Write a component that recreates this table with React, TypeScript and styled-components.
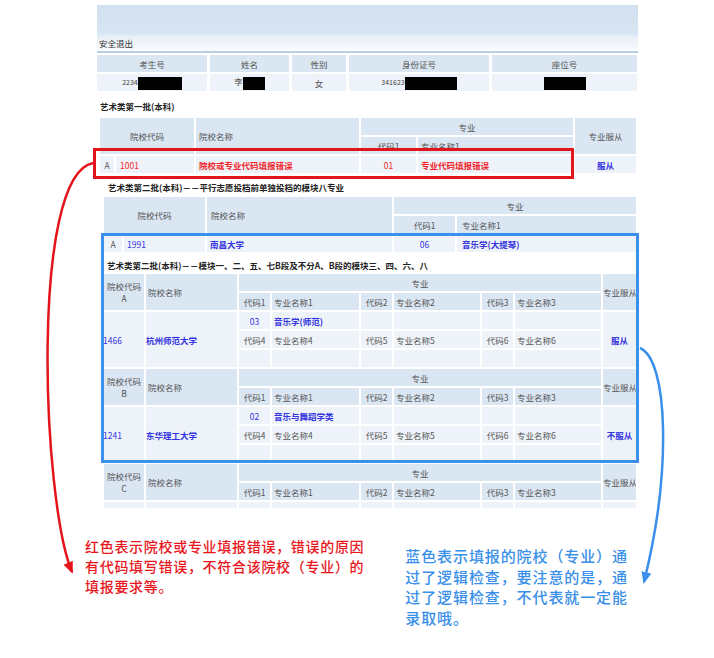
import React from "react";
import styled, { createGlobalStyle } from "styled-components";

const GlobalStyle = createGlobalStyle`
  html, body { margin: 0; padding: 0; background: #fff; }
  body { font-family: "Noto Sans CJK SC", "Noto Sans", sans-serif; }
`;

const Canvas = styled.div`
  position: relative;
  width: 714px;
  height: 658px;
  overflow: hidden;
  background: #fff;
`;

const Sheet = styled.div`
  margin-left: 97px;
  padding-top: 5px;
  width: 541px;
  font-family: "Noto Sans CJK SC", sans-serif;
  font-size: 8.5px;
  color: #555;
`;

const Banner = styled.div`
  height: 30px;
  background: linear-gradient(#d1e0ef, #d9e6f3);
`;

const LogoutBar = styled.div`
  height: 16px;
  line-height: 16px;
  padding-left: 2px;
  background: linear-gradient(#e4edf7, #fafcfe);
  border-bottom: 2px solid #b9cee3;
  color: #333;
  font-size: 8.5px;
`;

const SectionTitle = styled.div<{ $indent: number; $mt: number }>`
  margin-top: ${(p) => p.$mt}px;
  padding-left: ${(p) => p.$indent}px;
  height: 14px;
  line-height: 14px;
  font-size: 8.5px;
  font-weight: 700;
  color: #222;
  white-space: nowrap;
`;

const Grid = styled.table<{ $ml: number; $w: number; $sx?: number; $mt?: number }>`
  margin-left: ${(p) => p.$ml}px;
  margin-top: ${(p) => p.$mt ?? 0}px;
  width: ${(p) => p.$w}px;
  table-layout: fixed;
  border-collapse: separate;
  border-spacing: ${(p) => p.$sx ?? 2}px 2px;
`;

const Col = styled.col<{ $w: number }>`
  width: ${(p) => p.$w}px;
`;

type Align = "left" | "center";

const Th = styled.th<{ $align?: Align; $indent?: number }>`
  background: #dae6f2;
  color: #555;
  font-weight: normal;
  font-size: 8.5px;
  height: 17px;
  padding: 0;
  text-align: ${(p) => p.$align ?? "center"};
  text-indent: ${(p) => p.$indent ?? 0}px;
  vertical-align: middle;
  line-height: 12px;
  white-space: nowrap;
  overflow: hidden;
`;

const toneColor = { grey: "#555", red: "#f0282d", blue: "#3434e0" };

const Td = styled.td<{
  $tone?: "grey" | "red" | "blue";
  $align?: Align;
  $indent?: number;
  $bold?: boolean;
  $h?: number;
}>`
  background: #eef3f9;
  color: ${(p) => toneColor[p.$tone ?? "grey"]};
  font-weight: ${(p) => (p.$bold ? 700 : 400)};
  font-size: 8.5px;
  height: ${(p) => p.$h ?? 17}px;
  padding: 0;
  text-align: ${(p) => p.$align ?? "center"};
  text-indent: ${(p) => p.$indent ?? 0}px;
  vertical-align: middle;
  line-height: 12px;
  white-space: nowrap;
  overflow: hidden;
`;

const Digits = styled.span`
  font-size: 7px;
  color: #444;
`;

const Redact = styled.span<{ $w: number }>`
  display: inline-block;
  width: ${(p) => p.$w}px;
  height: 13px;
  background: #000;
  vertical-align: middle;
`;

const Frame = styled.div<{ $color: string; $x: number; $y: number; $w: number; $h: number }>`
  position: absolute;
  left: ${(p) => p.$x}px;
  top: ${(p) => p.$y}px;
  width: ${(p) => p.$w}px;
  height: ${(p) => p.$h}px;
  box-sizing: border-box;
  border: 3px solid ${(p) => p.$color};
  pointer-events: none;
`;

const ArrowLayer = styled.svg`
  position: absolute;
  left: 0;
  top: 0;
  pointer-events: none;
`;

const Notes = styled.div`
  display: flex;
  align-items: flex-start;
  margin-top: 26px;
  font-family: "Noto Sans CJK SC", sans-serif;
  font-weight: 500;
  white-space: nowrap;
`;

const Note = styled.div<{ $color: string; $ml: number; $mt: number; $size: number; $ls: number; $lh: number }>`
  margin-left: ${(p) => p.$ml}px;
  margin-top: ${(p) => p.$mt}px;
  color: ${(p) => p.$color};
  font-size: ${(p) => p.$size}px;
  letter-spacing: ${(p) => p.$ls}px;
  line-height: ${(p) => p.$lh}px;
`;

function GroupHeader({ letter }: { letter: string }) {
  return (
    <>
      <tr>
        <Th rowSpan={2}>
          院校代码
          <br />
          {letter}
        </Th>
        <Th rowSpan={2} $align="left" $indent={2}>
          院校名称
        </Th>
        <Th colSpan={6}>专业</Th>
        <Th rowSpan={2}>专业服从</Th>
      </tr>
      <tr>
        <Th>代码1</Th>
        <Th $align="left" $indent={2}>专业名称1</Th>
        <Th>代码2</Th>
        <Th $align="left" $indent={2}>专业名称2</Th>
        <Th>代码3</Th>
        <Th $align="left" $indent={2}>专业名称3</Th>
      </tr>
    </>
  );
}

function GroupBody({
  code,
  school,
  major,
  majorName,
  obey,
}: {
  code: string;
  school: string;
  major: string;
  majorName: string;
  obey: string;
}) {
  return (
    <>
      <tr>
        <Td rowSpan={3} $tone="blue" $align="left" $indent={-1}>
          {code}
        </Td>
        <Td rowSpan={3} $tone="blue" $align="left" $indent={0} $bold>
          {school}
        </Td>
        <Td $tone="blue">{major}</Td>
        <Td $tone="blue" $align="left" $indent={2} $bold>
          {majorName}
        </Td>
        <Td />
        <Td />
        <Td />
        <Td />
        <Td rowSpan={3} $tone="blue" $bold>
          {obey}
        </Td>
      </tr>
      <tr>
        <Td>代码4</Td>
        <Td $align="left" $indent={2}>专业名称4</Td>
        <Td>代码5</Td>
        <Td $align="left" $indent={2}>专业名称5</Td>
        <Td>代码6</Td>
        <Td $align="left" $indent={2}>专业名称6</Td>
      </tr>
      <tr>
        <Td />
        <Td />
        <Td />
        <Td />
        <Td />
        <Td />
      </tr>
    </>
  );
}

export default function App() {
  return (
    <Canvas>
      <GlobalStyle />
      <Sheet>
        <Banner />
        <LogoutBar>安全退出</LogoutBar>

        <Grid $ml={-3} $w={546} $sx={3}>
          <colgroup>
            <Col $w={110} />
            <Col $w={79} />
            <Col $w={54} />
            <Col $w={140} />
            <Col $w={145} />
          </colgroup>
          <tbody>
            <tr>
              <Th>考生号</Th>
              <Th>姓名</Th>
              <Th>性别</Th>
              <Th>身份证号</Th>
              <Th>座位号</Th>
            </tr>
            <tr>
              <Td>
                <Digits>2234</Digits>
                <Redact $w={44} />
              </Td>
              <Td>
                李<Redact $w={22} />
              </Td>
              <Td>女</Td>
              <Td>
                <Digits>341623</Digits>
                <Redact $w={52} />
              </Td>
              <Td>
                <Redact $w={42} />
              </Td>
            </tr>
          </tbody>
        </Grid>

        <SectionTitle $indent={3} $mt={6}>
          艺术类第一批(本科)
        </SectionTitle>
        <Grid $ml={1} $w={540} $mt={3}>
          <colgroup>
            <Col $w={14} />
            <Col $w={78} />
            <Col $w={163} />
            <Col $w={55} />
            <Col $w={155} />
            <Col $w={61} />
          </colgroup>
          <tbody>
            <tr>
              <Th colSpan={2} rowSpan={2}>院校代码</Th>
              <Th rowSpan={2} $align="left" $indent={3}>院校名称</Th>
              <Th colSpan={2}>专业</Th>
              <Th rowSpan={2}>专业服从</Th>
            </tr>
            <tr>
              <Th>代码1</Th>
              <Th $align="left" $indent={3}>专业名称1</Th>
            </tr>
            <tr>
              <Td>A</Td>
              <Td $tone="red" $align="left" $indent={4}>1001</Td>
              <Td $tone="red" $align="left" $indent={3} $bold>院校或专业代码填报错误</Td>
              <Td $tone="red">01</Td>
              <Td $tone="red" $align="left" $indent={3} $bold>专业代码填报错误</Td>
              <Td $tone="blue" $bold>服从</Td>
            </tr>
          </tbody>
        </Grid>

        <SectionTitle $indent={11} $mt={5}>
          艺术类第二批(本科)－－平行志愿投档前单独投档的模块八专业
        </SectionTitle>
        <Grid $ml={5} $w={536} $mt={1}>
          <colgroup>
            <Col $w={18} />
            <Col $w={81} />
            <Col $w={185} />
            <Col $w={61} />
            <Col $w={179} />
          </colgroup>
          <tbody>
            <tr>
              <Th colSpan={2} rowSpan={2}>院校代码</Th>
              <Th rowSpan={2} $align="left" $indent={4}>院校名称</Th>
              <Th colSpan={2}>专业</Th>
            </tr>
            <tr>
              <Th>代码1</Th>
              <Th $align="left" $indent={5}>专业名称1</Th>
            </tr>
            <tr>
              <Td>A</Td>
              <Td $tone="blue" $align="left" $indent={3}>1991</Td>
              <Td $tone="blue" $align="left" $indent={3} $bold>南昌大学</Td>
              <Td $tone="blue">06</Td>
              <Td $tone="blue" $align="left" $indent={5} $bold>音乐学(大提琴)</Td>
            </tr>
          </tbody>
        </Grid>

        <SectionTitle $indent={10} $mt={4}>
          艺术类第二批(本科)－－模块一、二、五、七B段及不分A、B段的模块三、四、六、八
        </SectionTitle>
        <Grid $ml={5} $w={536}>
          <colgroup>
            <Col $w={40} />
            <Col $w={91} />
            <Col $w={31} />
            <Col $w={87} />
            <Col $w={31} />
            <Col $w={86} />
            <Col $w={31} />
            <Col $w={86} />
            <Col $w={33} />
          </colgroup>
          <tbody>
            <GroupHeader letter="A" />
            <GroupBody code="1466" school="杭州师范大学" major="03" majorName="音乐学(师范)" obey="服从" />
            <GroupHeader letter="B" />
            <GroupBody code="1241" school="东华理工大学" major="02" majorName="音乐与舞蹈学类" obey="不服从" />
            <GroupHeader letter="C" />
            <tr>
              {Array.from({ length: 9 }).map((_, i) => (
                <Td key={i} $h={6} />
              ))}
            </tr>
          </tbody>
        </Grid>
      </Sheet>

      <Notes>
        <Note $color="#e8161d" $ml={85} $mt={0} $size={14} $ls={0.7} $lh={20}>
          红色表示院校或专业填报错误，错误的原因
          <br />
          有代码填写错误，不符合该院校（专业）的
          <br />
          填报要求等。
        </Note>
        <Note $color="#3a8fe8" $ml={41} $mt={10} $size={15} $ls={0.9} $lh={20.5}>
          蓝色表示填报的院校（专业）通
          <br />
          过了逻辑检查，要注意的是，通
          <br />
          过了逻辑检查，不代表就一定能
          <br />
          录取哦。
        </Note>
      </Notes>

      <Frame $color="#e3151b" $x={93} $y={148} $w={481} $h={31} />
      <Frame $color="#3a90ea" $x={101} $y={233} $w={538} $h={230} />

      <ArrowLayer width={714} height={658} viewBox="0 0 714 658">
        <defs>
          <marker id="headRed" viewBox="0 0 12 10" refX="10" refY="5" markerWidth="12" markerHeight="10" markerUnits="userSpaceOnUse" orient="auto">
            <path d="M0 0 L12 5 L0 10 z" fill="#e3151b" />
          </marker>
          <marker id="headBlue" viewBox="0 0 12 10" refX="10" refY="5" markerWidth="12" markerHeight="10" markerUnits="userSpaceOnUse" orient="auto">
            <path d="M0 0 L12 5 L0 10 z" fill="#3a90ea" />
          </marker>
        </defs>
        <path d="M93 163 C30 175, 42 500, 72 572" fill="none" stroke="#e3151b" strokeWidth={2.5} markerEnd="url(#headRed)" />
        <path d="M640 348 C668 360, 672 470, 644 582" fill="none" stroke="#3a90ea" strokeWidth={2.5} markerEnd="url(#headBlue)" />
      </ArrowLayer>
    </Canvas>
  );
}
